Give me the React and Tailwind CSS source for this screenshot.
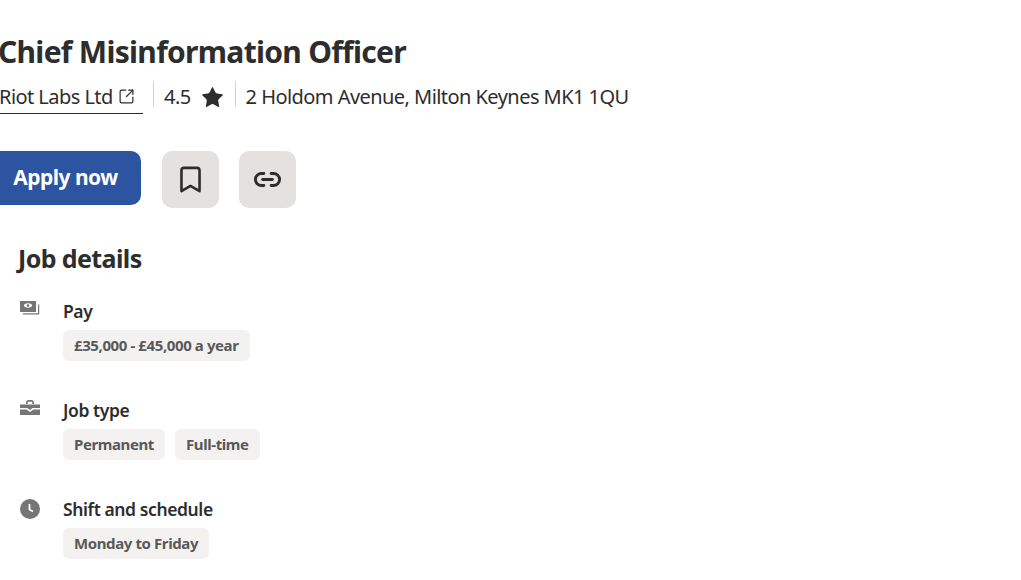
import React from "react";
import { Star, Bookmark, Link2, SquareArrowOutUpRight } from "lucide-react";

const FONT = "font-['Noto_Sans',sans-serif]";

function MoneyIcon() {
  return (
    <svg width="22" height="18" viewBox="0 0 22 18" fill="none">
      <path fillRule="evenodd" d="M1 1h16v11H1zM9 3.2c-2.4 0-4.2 1.1-4.2 2.3S6.600 7.800 9 7.800s4.200-1.100 4.200-2.300S11.400 3.200 9 3.200z" fill="#767676" />
      <circle cx="9" cy="5.500" r="1.300" fill="#767676" />
      <path d="M19 4.500h1.200v10H4V13.200h15z" fill="#767676" />
    </svg>
  );
}

function CaseIcon() {
  return (
    <svg width="22" height="18" viewBox="0 0 22 18" fill="none">
      <path d="M7 5V3.500C7 2.100 8.100 1 9.500 1h3C13.900 1 15 2.100 15 3.500V5h-1.700V3.700c0-.6-.4-1-1-1H9.700c-.6 0-1 .4-1 1V5z" fill="#767676" />
      <path d="M1 5.500h20V9h-7.500l-2.500 2-2.500-2H1zM1 10.500h6.500L11 13l3.500-2.500H21V16H1z" fill="#767676" />
    </svg>
  );
}

function ClockIcon() {
  return (
    <svg width="22" height="22" viewBox="0 0 22 22" fill="none">
      <circle cx="11" cy="11" r="10" fill="#767676" />
      <path d="M10.500 6v5.500l3.500 2" stroke="#fff" strokeWidth="1.800" />
    </svg>
  );
}

function Tag({ children }) {
  return (
    <span className="flex h-[31px] items-center rounded-md bg-[#f3f2f1] px-[11px] text-[15px] font-bold tracking-[-0.4px] text-[#595959]">
      {children}
    </span>
  );
}

function Detail({ icon, label, tags }) {
  return (
    <div className="flex h-[99px]">
      <div className="flex w-[45px] shrink-0 pl-px pt-[1px]">{icon}</div>
      <div>
        <div className="h-[24px] text-[17.500px] font-semibold leading-[24px] tracking-[-0.4px] text-[#2d2d2d]">{label}</div>
        <div className="mt-[7px] flex gap-[10px]">
          {tags.map((t) => (
            <Tag key={t}>{t}</Tag>
          ))}
        </div>
      </div>
    </div>
  );
}

export default function App() {
  return (
    <div className={`h-[580px] w-[1021px] overflow-hidden bg-white pt-[31px] ${FONT}`}>
      <h1 className="ml-[-2px] whitespace-nowrap text-[30px] font-bold leading-[41px] tracking-[-0.700px] text-[#2d2d2d]">
        Chief Misinformation Officer
      </h1>
      <div className="mt-[8px] flex h-[34px] items-center whitespace-nowrap text-[20px] tracking-[-0.550px] text-[#2d2d2d]">
        <a className="ml-[-1px] flex h-[34px] w-[144px] items-center gap-[5px] border-b border-[#2d2d2d]">
          Riot Labs Ltd
          <SquareArrowOutUpRight size={17} strokeWidth={1.700} />
        </a>
        <span className="ml-[10px] mb-[6px] h-[26px] border-l border-[#d4d2d0]" />
        <span className="ml-[10px]">4.5</span>
        <Star size={25} fill="#2d2d2d" strokeWidth={0} className="ml-[9px]" />
        <span className="ml-[10px] mb-[6px] h-[26px] border-l border-[#d4d2d0]" />
        <span className="ml-[10px]">2 Holdom Avenue, Milton Keynes MK1 1QU</span>
      </div>
      <div className="mt-[37px] flex items-start">
        <button className="ml-[-10px] h-[54px] w-[151px] rounded-[10px] bg-[#2c54a0] text-[21px] font-bold tracking-[-0.500px] text-white">
          Apply now
        </button>
        <button className="ml-[21px] flex h-[57px] w-[57px] items-center justify-center rounded-[10px] bg-[#e4e2e0]">
          <Bookmark size={31} strokeWidth={2} color="#2d2d2d" />
        </button>
        <button className="ml-[20px] flex h-[57px] w-[57px] items-center justify-center rounded-[10px] bg-[#e4e2e0]">
          <Link2 size={29} strokeWidth={2.400} color="#2d2d2d" />
        </button>
      </div>
      <div className="pl-[18px]">
        <h2 className="mt-[33px] text-[25px] font-bold leading-[34px] tracking-[-0.600px] text-[#2d2d2d]">Job details</h2>
        <div className="mt-[24px]">
          <Detail icon={<MoneyIcon />} label="Pay" tags={["£35,000 - £45,000 a year"]} />
          <Detail icon={<CaseIcon />} label="Job type" tags={["Permanent", "Full-time"]} />
          <Detail icon={<ClockIcon />} label="Shift and schedule" tags={["Monday to Friday"]} />
        </div>
      </div>
    </div>
  );
}
